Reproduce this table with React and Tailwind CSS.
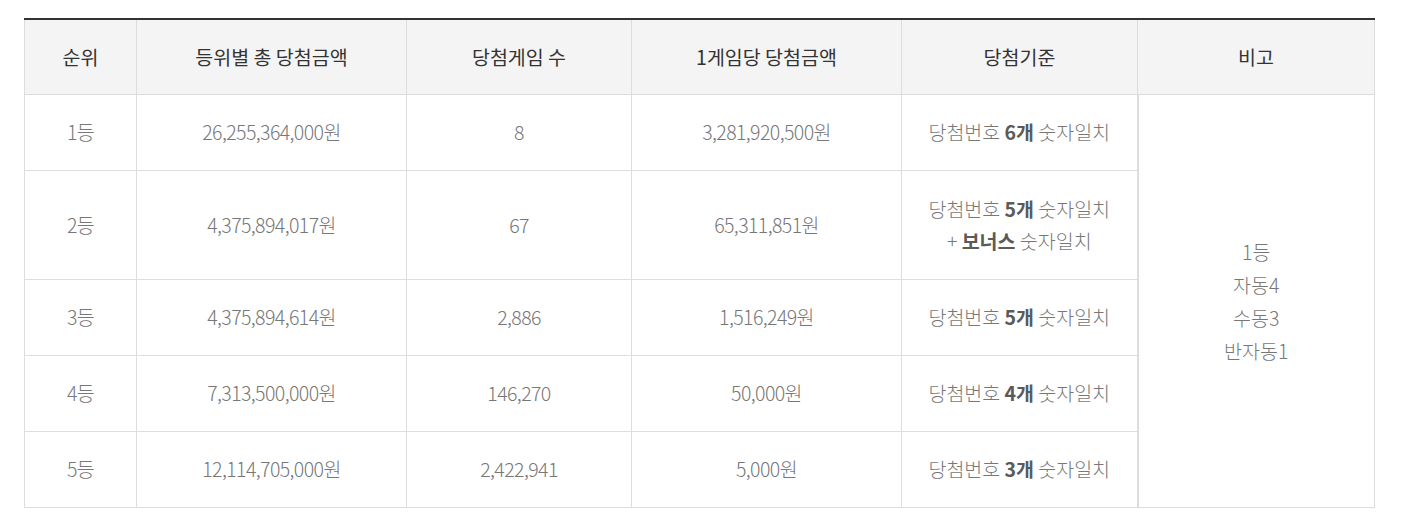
const rows = [
  { rank: "1등", total: "26,255,364,000원", count: "8", each: "3,281,920,500원", n: "6" },
  { rank: "2등", total: "4,375,894,017원", count: "67", each: "65,311,851원", n: "5", bonus: true },
  { rank: "3등", total: "4,375,894,614원", count: "2,886", each: "1,516,249원", n: "5" },
  { rank: "4등", total: "7,313,500,000원", count: "146,270", each: "50,000원", n: "4" },
  { rank: "5등", total: "12,114,705,000원", count: "2,422,941", each: "5,000원", n: "3" },
];

const heads = ["순위", "등위별 총 당첨금액", "당첨게임 수", "1게임당 당첨금액", "당첨기준", "비고"];

export default function App() {
  return (
    <div
      className="bg-white w-[1405px] h-[518px] pt-[18px] pl-[24px]"
      style={{ fontFamily: '"Noto Sans CJK KR", "Noto Sans", sans-serif' }}
    >
      <table className="border-collapse text-center text-[19.5px] w-[1350px] table-fixed">
        <colgroup>
          <col className="w-[112px]" />
          <col className="w-[270px]" />
          <col className="w-[225px]" />
          <col className="w-[270px]" />
          <col className="w-[236px]" />
          <col className="w-[237px]" />
        </colgroup>
        <thead>
          <tr className="h-[75px] bg-[#f4f4f4] border-t-2 border-t-[#333]">
            {heads.map((h) => (
              <th key={h} className="border border-[#dddddd] border-t-[#333] font-normal text-[#333]">
                {h}
              </th>
            ))}
          </tr>
        </thead>
        <tbody className="text-[#777] font-light">
          {rows.map((r, i) => (
            <tr key={r.rank} className={r.bonus ? "h-[109px]" : "h-[76px]"}>
              <td className="border border-[#dddddd] tracking-[-0.03em]">{r.rank}</td>
              <td className="border border-[#dddddd] tracking-[-0.03em]">{r.total}</td>
              <td className="border border-[#dddddd] tracking-[-0.03em]">{r.count}</td>
              <td className="border border-[#dddddd] tracking-[-0.03em]">{r.each}</td>
              <td className="border border-[#dddddd] border-r-2 leading-[32px]">
                당첨번호 <b className="font-bold text-[#5a5a5a]">{r.n}개</b> 숫자일치
                {r.bonus && (
                  <>
                    <br />+ <b className="font-bold text-[#5a5a5a]">보너스</b> 숫자일치
                  </>
                )}
              </td>
              {i === 0 && (
                <td rowSpan={5} className="border border-[#dddddd] leading-[33px]">
                  1등
                  <br />
                  자동4
                  <br />
                  수동3
                  <br />
                  반자동1
                </td>
              )}
            </tr>
          ))}
        </tbody>
      </table>
    </div>
  );
}
